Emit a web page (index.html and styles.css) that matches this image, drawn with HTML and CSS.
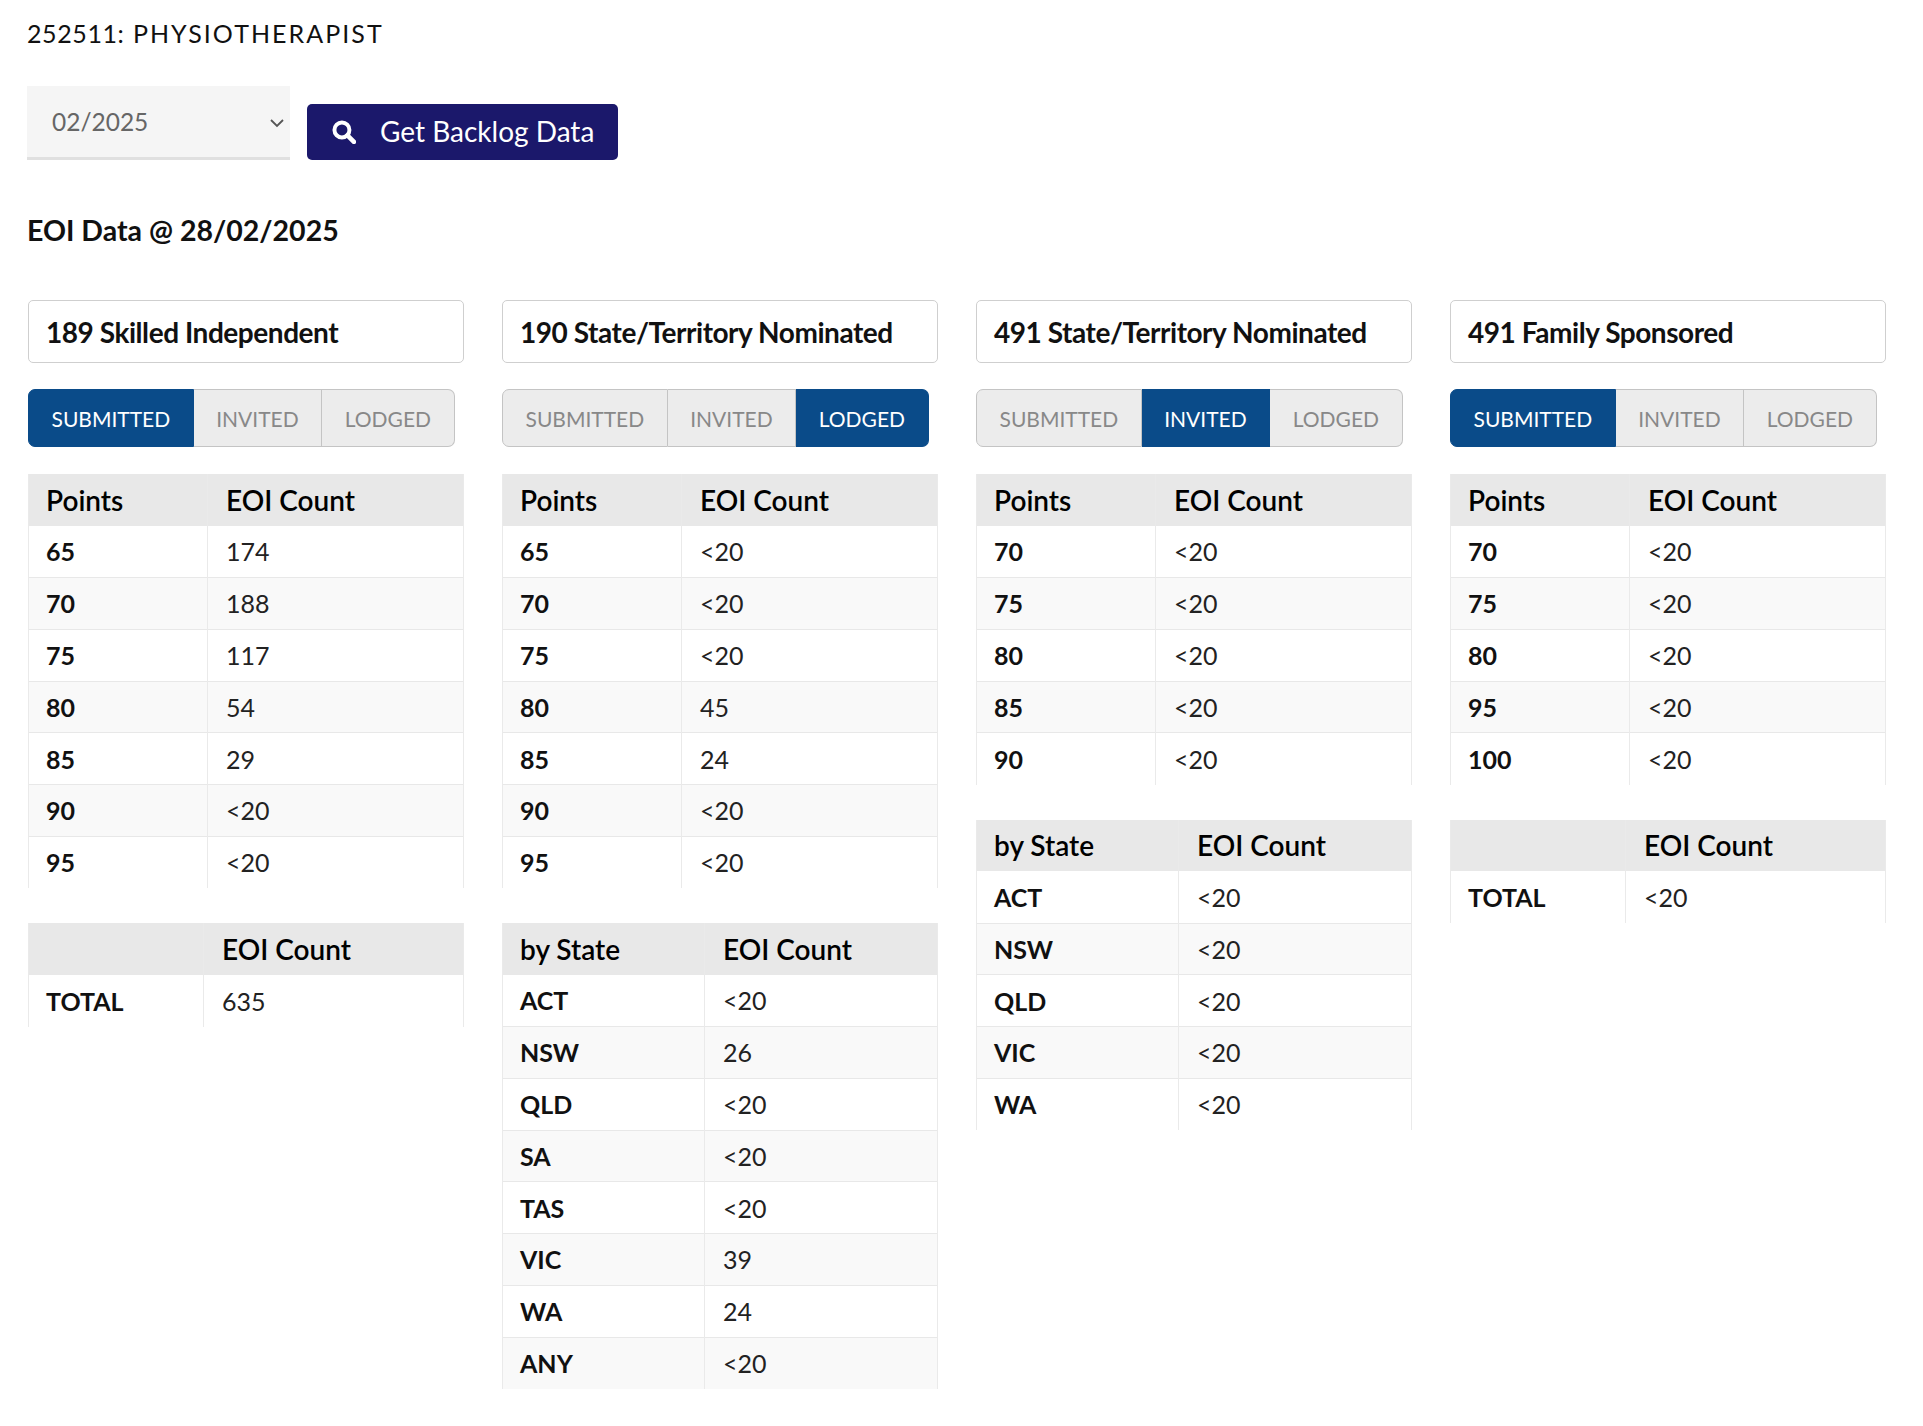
FILE: index.html
```html
<!DOCTYPE html>
<html lang="en">
<head>
<meta charset="utf-8">
<title>252511: Physiotherapist</title>
<link rel="stylesheet" href="styles.css">
</head>
<body>
<main class="page">
  <h1 class="occupation"><span class="code">252511:</span> PHYSIOTHERAPIST</h1>
  <div class="filters">
    <div class="select"><span>02/2025</span>
      <svg class="chevron" viewBox="0 0 16 16" width="16" height="16"><path d="M2 5 8 11 14 5" fill="none" stroke="#555" stroke-width="1.8"/></svg>
    </div>
    <button class="btn" type="button">
      <svg class="search" viewBox="0 0 24 24" width="25" height="25"><circle cx="10.5" cy="10.5" r="7.2" fill="none" stroke="#fff" stroke-width="3.8"/><path d="M15.8 15.8 22 22" stroke="#fff" stroke-width="4.4" stroke-linecap="round"/></svg>
      <span>Get Backlog Data</span>
    </button>
  </div>
  <h2 class="date">EOI Data @ 28/02/2025</h2>
  <div class="grid">

    <section class="col">
      <div class="card-title">189 Skilled Independent</div>
      <div class="tabs"><span class="tab on">SUBMITTED</span><span class="tab">INVITED</span><span class="tab">LODGED</span></div>
      <table>
        <tr><th class="w-points">Points</th><th>EOI Count</th></tr>
        <tr><td>65</td><td>174</td></tr>
        <tr><td>70</td><td>188</td></tr>
        <tr><td>75</td><td>117</td></tr>
        <tr><td>80</td><td>54</td></tr>
        <tr><td>85</td><td>29</td></tr>
        <tr><td>90</td><td>&lt;20</td></tr>
        <tr><td>95</td><td>&lt;20</td></tr>
      </table>
      <table>
        <tr><th class="w-total"></th><th>EOI Count</th></tr>
        <tr><td>TOTAL</td><td>635</td></tr>
      </table>
    </section>

    <section class="col">
      <div class="card-title">190 State/Territory Nominated</div>
      <div class="tabs"><span class="tab">SUBMITTED</span><span class="tab">INVITED</span><span class="tab on">LODGED</span></div>
      <table>
        <tr><th class="w-points">Points</th><th>EOI Count</th></tr>
        <tr><td>65</td><td>&lt;20</td></tr>
        <tr><td>70</td><td>&lt;20</td></tr>
        <tr><td>75</td><td>&lt;20</td></tr>
        <tr><td>80</td><td>45</td></tr>
        <tr><td>85</td><td>24</td></tr>
        <tr><td>90</td><td>&lt;20</td></tr>
        <tr><td>95</td><td>&lt;20</td></tr>
      </table>
      <table>
        <tr><th class="w-state">by State</th><th>EOI Count</th></tr>
        <tr><td>ACT</td><td>&lt;20</td></tr>
        <tr><td>NSW</td><td>26</td></tr>
        <tr><td>QLD</td><td>&lt;20</td></tr>
        <tr><td>SA</td><td>&lt;20</td></tr>
        <tr><td>TAS</td><td>&lt;20</td></tr>
        <tr><td>VIC</td><td>39</td></tr>
        <tr><td>WA</td><td>24</td></tr>
        <tr><td>ANY</td><td>&lt;20</td></tr>
      </table>
    </section>

    <section class="col">
      <div class="card-title">491 State/Territory Nominated</div>
      <div class="tabs"><span class="tab">SUBMITTED</span><span class="tab on">INVITED</span><span class="tab">LODGED</span></div>
      <table>
        <tr><th class="w-points">Points</th><th>EOI Count</th></tr>
        <tr><td>70</td><td>&lt;20</td></tr>
        <tr><td>75</td><td>&lt;20</td></tr>
        <tr><td>80</td><td>&lt;20</td></tr>
        <tr><td>85</td><td>&lt;20</td></tr>
        <tr><td>90</td><td>&lt;20</td></tr>
      </table>
      <table>
        <tr><th class="w-state">by State</th><th>EOI Count</th></tr>
        <tr><td>ACT</td><td>&lt;20</td></tr>
        <tr><td>NSW</td><td>&lt;20</td></tr>
        <tr><td>QLD</td><td>&lt;20</td></tr>
        <tr><td>VIC</td><td>&lt;20</td></tr>
        <tr><td>WA</td><td>&lt;20</td></tr>
      </table>
    </section>

    <section class="col">
      <div class="card-title">491 Family Sponsored</div>
      <div class="tabs"><span class="tab on">SUBMITTED</span><span class="tab">INVITED</span><span class="tab">LODGED</span></div>
      <table>
        <tr><th class="w-points">Points</th><th>EOI Count</th></tr>
        <tr><td>70</td><td>&lt;20</td></tr>
        <tr><td>75</td><td>&lt;20</td></tr>
        <tr><td>80</td><td>&lt;20</td></tr>
        <tr><td>95</td><td>&lt;20</td></tr>
        <tr><td>100</td><td>&lt;20</td></tr>
      </table>
      <table>
        <tr><th class="w-total"></th><th>EOI Count</th></tr>
        <tr><td>TOTAL</td><td>&lt;20</td></tr>
      </table>
    </section>

  </div>
</main>
</body>
</html>
```
FILE: styles.css
```css
* { box-sizing: border-box; }
html, body { margin: 0; background: #fff; }
body { font-family: "Lato", "Liberation Sans", sans-serif; color: #000; }
.page { padding: 18px 37px 30px 28px; width: 1923px; }
.occupation { margin: 0 0 0 -1px; font-size: 25px; line-height: 30px; font-weight: 400; letter-spacing: 2.05px; color: #111; }
.code { letter-spacing: 0.6px; }
.filters { display: flex; align-items: flex-end; gap: 17px; margin-top: 38px; margin-left: -1px; }
.select { width: 263px; height: 74px; background: #f5f5f5; border-bottom: 3px solid #e0e0e0; display: flex; justify-content: space-between; align-items: center; padding: 0 5px 0 25px; font-size: 24.5px; color: #666; }
.chevron { margin-top: 2px; }
.btn { width: 311px; height: 56px; display: flex; align-items: center; gap: 24px; padding: 0 0 2px 24px; border: 0; border-radius: 5px; background: #1b186b; color: #fff; font: 400 28px "Lato", "Liberation Sans", sans-serif; white-space: nowrap; }
.date { margin: 52px 0 0 -1px; font-size: 28.5px; line-height: 36px; font-weight: 700; color: #111; }
.grid { display: grid; grid-template-columns: repeat(4, 436px); gap: 38px; align-items: start; margin-top: 52px; }
.card-title { height: 63px; border: 1.5px solid #cfcfcf; border-radius: 5px; padding: 0 17px; display: flex; align-items: center; font-size: 28px; font-weight: 700; letter-spacing: -0.45px; color: #111; }
.tabs { display: inline-flex; margin-top: 26px; height: 58px; vertical-align: top; }
.tab { display: flex; align-items: center; height: 58px; padding: 0 22.5px; background: #ececec; border: 1px solid #c4c4c4; border-left: 0; color: #888; font-size: 21px; }
.tab:first-child { border-left: 1px solid #c4c4c4; border-radius: 7px 0 0 7px; }
.tab:last-child { border-radius: 0 7px 7px 0; }
.tab.on { background: #0a4b89; border-color: #0a4b89; color: #fff; }
table { width: 436px; table-layout: fixed; border-collapse: collapse; }
table + table { margin-top: 35px; }
.tabs + table { margin-top: 27px; }
th, td { height: 51.75px; padding: 0 17px 0 18px; border: 1px solid #eaeaea; border-top: 0; border-bottom: 0; text-align: left; }
th:first-child, td:first-child { padding-left: 17px; }
th { background: #e8e8e8; font-size: 28px; font-weight: 600; color: #000; }
td { border-top: 1px solid #e8e8e8; font-size: 25px; color: #222; }
td:first-child { font-weight: 700; color: #111; }
tr:nth-child(odd) td { background: #f9f9f9; }
tr:nth-child(2) td { border-top: 0; }
.w-points { width: 179px; }
.w-total { width: 175px; }
.w-state { width: 202px; }
```
